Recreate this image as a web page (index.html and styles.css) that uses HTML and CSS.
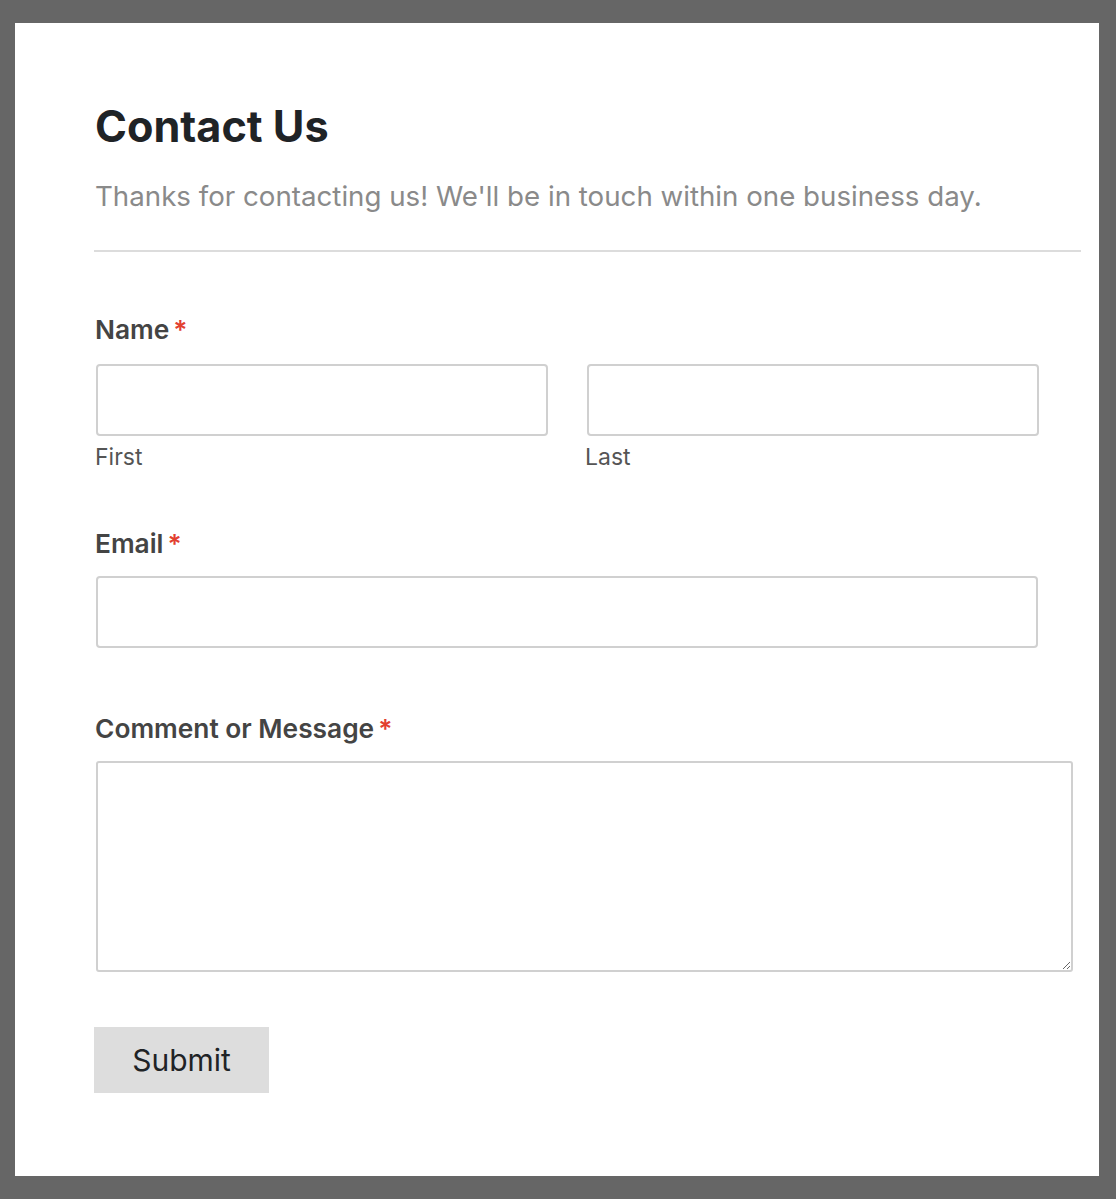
FILE: index.html
```html
<!DOCTYPE html>
<html lang="en">
<head>
<meta charset="utf-8">
<title>Contact Us</title>
<link rel="stylesheet" href="styles.css">
</head>
<body>
<div class="card">
  <header class="form-header">
    <h1 class="title">Contact Us</h1>
    <p class="subtitle">Thanks for contacting us! We'll be in touch within one business day.</p>
  </header>
  <form class="form">
    <div class="field field-name">
      <div class="label label-name">Name<span class="req">*</span></div>
      <div class="name-row">
        <div class="name-col">
          <input class="input" type="text">
          <span class="sublabel">First</span>
        </div>
        <div class="name-col">
          <input class="input" type="text">
          <span class="sublabel sublabel-last">Last</span>
        </div>
      </div>
    </div>
    <div class="field">
      <div class="label">Email<span class="req">*</span></div>
      <input class="input input-wide" type="email">
    </div>
    <div class="field field-message">
      <div class="label">Comment or Message<span class="req">*</span></div>
      <textarea class="textarea"></textarea>
    </div>
    <button class="submit" type="button">Submit</button>
  </form>
</div>
</body>
</html>
```

FILE: styles.css
```css
html, body {
  margin: 0;
  padding: 0;
}
body {
  background: #666666;
  padding: 23px 17px 23px 15px;
  font-family: Inter, "Liberation Sans", Arial, sans-serif;
}
.card {
  background: #ffffff;
  height: 1153px;
  box-sizing: border-box;
  padding: 78px 18px 0 79px;
}
.form-header {
  border-bottom: 2px solid #dcdcdc;
  padding-bottom: 38px;
}
.title {
  margin: 0 0 0 1px;
  font-size: 43.2px;
  line-height: 50px;
  font-weight: 700;
  color: #1f2326;
}
.subtitle {
  margin: 29px 0 0 1px;
  font-size: 27.7px;
  line-height: 32px;
  color: #8a8a8a;
}
.form {
  padding-top: 63px;
}
.field {
  margin-bottom: 66px;
}
.field-name {
  margin-bottom: 59px;
}
.field-message {
  margin-bottom: 55px;
}
.label {
  font-size: 26.3px;
  line-height: 30px;
  font-weight: 600;
  color: #444444;
  margin: 0 0 17px 1px;
}
.label-name {
  margin-bottom: 19px;
}
.req {
  color: #e2402f;
  margin-left: 4px;
}
.name-row {
  display: flex;
  gap: 39px;
  width: 943px;
  margin-left: 2px;
}
.name-col {
  flex: 1;
  display: flex;
  flex-direction: column;
}
.input {
  display: block;
  height: 72px;
  box-sizing: border-box;
  border: 2px solid #d0d0d0;
  border-radius: 4px;
  background: #fff;
  margin: 0;
  padding: 0 12px;
  font: inherit;
}
.name-col .input {
  width: 100%;
}
.input-wide {
  width: 942px;
  margin-left: 2px;
}
.sublabel {
  font-size: 23px;
  line-height: 26px;
  color: #555555;
  margin: 8px 0 0 -1px;
}
.sublabel-last {
  margin-left: -2px;
}
.textarea {
  display: block;
  width: 977px;
  height: 211px;
  box-sizing: border-box;
  border: 2px solid #d0d0d0;
  border-radius: 3px;
  margin: 0 0 0 2px;
  padding: 8px;
  font: inherit;
  resize: vertical;
}
.submit {
  display: block;
  width: 175px;
  height: 66px;
  border: none;
  border-radius: 0;
  background: #dddddd;
  color: #1f2326;
  font-family: Inter, "Liberation Sans", Arial, sans-serif;
  font-size: 30px;
  padding: 0;
}
```
